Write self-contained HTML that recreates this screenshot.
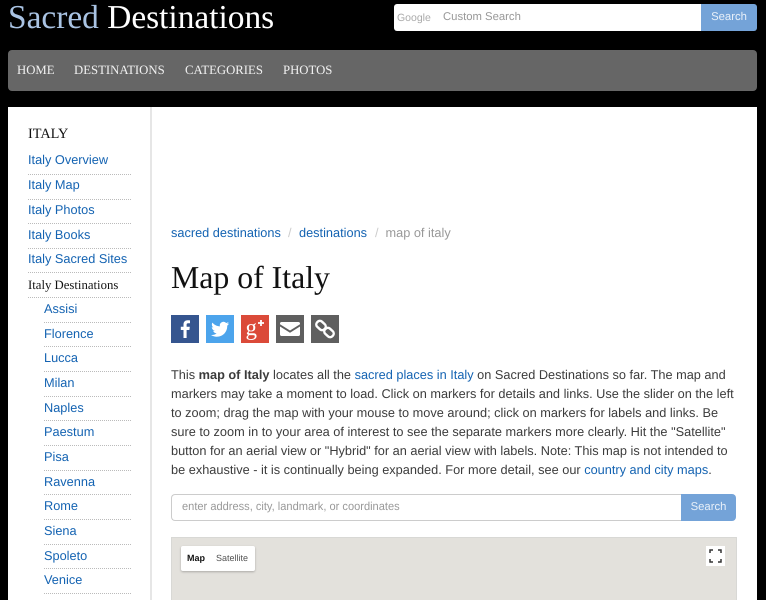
<!DOCTYPE html>
<html><head><meta charset="utf-8"><style>
html,body{margin:0;padding:0;background:#000;width:766px;height:600px;overflow:hidden}
body{position:relative;font-family:"Liberation Sans",sans-serif;font-size:12.75px;color:#333;filter:blur(.3px);text-rendering:geometricPrecision}
a{color:#1463b2;text-decoration:none}
.a{position:absolute;white-space:nowrap}
.s{font-family:"Liberation Serif",serif}
.side a,.side span{position:absolute;white-space:nowrap;line-height:20px}
.side i{position:absolute;height:0;border-top:1px dotted #bbb;display:block}
.ic{position:absolute;top:315px;width:28px;height:28px}
</style></head><body>
<div class="a s" style="left:8px;top:-3px;font-size:33.4px;line-height:42px;color:#fff"><span style="color:#a9c3e3">Sacred</span> Destinations</div>
<div class="a" style="left:394px;top:4px;width:307px;height:27px;background:#fff;border-radius:3px 0 0 3px"></div>
<div class="a" style="left:397px;top:11px;font-size:10.500px;line-height:14px;color:#aaa">Google</div>
<div class="a" style="left:443px;top:9px;font-size:11.300px;line-height:16px;color:#999">Custom Search</div>
<div class="a" style="left:701px;top:4px;width:56px;height:27px;background:#74a3d8;border-radius:0 3px 3px 0;color:#e8f0f9;font-size:11.300px;line-height:26px;text-align:center">Search</div>
<div class="a" style="left:8px;top:50px;width:749px;height:41px;background:#666;border-radius:4px"></div>
<div class="s" style="color:#f0f0f0;font-size:12.75px;line-height:18px">
<span class="a" style="left:17px;top:60.500px">HOME</span>
<span class="a" style="left:74px;top:60.500px">DESTINATIONS</span>
<span class="a" style="left:185px;top:60.500px">CATEGORIES</span>
<span class="a" style="left:283px;top:60.500px">PHOTOS</span>
</div>
<div class="a" style="left:8px;top:107px;width:749px;height:493px;background:#fff"></div>
<div class="a" style="left:150px;top:107px;width:2px;height:493px;background:#e6e6e6"></div>
<div class="side">
<span class="s" style="left:28px;top:124px;font-size:14.300px;color:#111">ITALY</span>
<a style="left:28px;top:150px">Italy Overview</a><i style="left:28px;top:174px;width:103px"></i>
<a style="left:28px;top:175px">Italy Map</a><i style="left:28px;top:199px;width:103px"></i>
<a style="left:28px;top:200px">Italy Photos</a><i style="left:28px;top:223px;width:103px"></i>
<a style="left:28px;top:224.500px">Italy Books</a><i style="left:28px;top:248px;width:103px"></i>
<a style="left:28px;top:249px">Italy Sacred Sites</a><i style="left:28px;top:272px;width:103px"></i>
<span class="s" style="left:28px;top:275px;font-size:12.75px;color:#111">Italy Destinations</span><i style="left:28px;top:297px;width:103px"></i>
<a style="left:44px;top:299px">Assisi</a><i style="left:44px;top:322px;width:87px"></i>
<a style="left:44px;top:323.500px">Florence</a><i style="left:44px;top:346px;width:87px"></i>
<a style="left:44px;top:348px">Lucca</a><i style="left:44px;top:371px;width:87px"></i>
<a style="left:44px;top:373px">Milan</a><i style="left:44px;top:396px;width:87px"></i>
<a style="left:44px;top:397.500px">Naples</a><i style="left:44px;top:420px;width:87px"></i>
<a style="left:44px;top:422px">Paestum</a><i style="left:44px;top:445px;width:87px"></i>
<a style="left:44px;top:447px">Pisa</a><i style="left:44px;top:470px;width:87px"></i>
<a style="left:44px;top:471.500px">Ravenna</a><i style="left:44px;top:494px;width:87px"></i>
<a style="left:44px;top:496px">Rome</a><i style="left:44px;top:519px;width:87px"></i>
<a style="left:44px;top:521px">Siena</a><i style="left:44px;top:544px;width:87px"></i>
<a style="left:44px;top:545.500px">Spoleto</a><i style="left:44px;top:568px;width:87px"></i>
<a style="left:44px;top:570px">Venice</a><i style="left:44px;top:593px;width:87px"></i>
</div>
<a class="a" style="left:171px;top:223px;line-height:20px">sacred destinations</a>
<span class="a" style="left:288px;top:223px;line-height:20px;color:#ccc">/</span>
<a class="a" style="left:299px;top:223px;line-height:20px">destinations</a>
<span class="a" style="left:375px;top:223px;line-height:20px;color:#ccc">/</span>
<span class="a" style="left:385.500px;top:223px;line-height:20px;color:#999">map of italy</span>
<div class="a s" style="left:171px;top:257px;font-size:31.8px;line-height:42px;color:#111">Map of Italy</div>

<svg class="ic" style="left:171px" viewBox="0 0 28 28"><rect width="28" height="28" fill="#35558f"/><path d="M15.6 23v-8h2.800l.4-3.200h-3.200V9.800c0-.9.3-1.500 1.600-1.500H19V5.400c-.3 0-1.300-.1-2.400-.1-2.400 0-4.100 1.500-4.100 4.200v2.300H9.800V15h2.700v8z" fill="#fff"/></svg>
<svg class="ic" style="left:206px" viewBox="0 0 28 28"><rect width="28" height="28" fill="#4ca4ec"/><path d="M23 8.500c-.7.300-1.400.5-2.100.6.800-.5 1.300-1.200 1.600-2-.7.400-1.500.7-2.300.9a3.700 3.700 0 0 0-6.300 3.400c-3-.2-5.700-1.600-7.500-3.800-1 1.700-.5 3.800 1.100 4.900-.6 0-1.200-.2-1.700-.5 0 1.800 1.300 3.300 3 3.700-.5.100-1.100.2-1.700.1.500 1.500 1.900 2.500 3.500 2.600A7.500 7.500 0 0 1 5 20c1.700 1.100 3.700 1.700 5.700 1.700 6.900 0 10.800-5.800 10.500-11 .7-.5 1.300-1.200 1.800-2.200z" fill="#fff"/></svg>
<svg class="ic" style="left:241px" viewBox="0 0 28 28"><rect width="28" height="28" fill="#db4a39"/><text x="4.500" y="20" font-family="Liberation Serif,serif" font-size="23" fill="#fff">g</text><path d="M17 8h6M20 5v6" stroke="#fff" stroke-width="1.800"/></svg>
<svg class="ic" style="left:276px" viewBox="0 0 28 28"><rect width="28" height="28" fill="#5f5f5f"/><path d="M4 8.500c0-.8.600-1.500 1.500-1.500h17c.9 0 1.500.7 1.500 1.500v.7l-10 6.300-10-6.300zM4 11.500l10 6.200 10-6.200v8c0 .8-.6 1.500-1.500 1.500h-17C4.600 21 4 20.300 4 19.500z" fill="#fff"/></svg>
<svg class="ic" style="left:311px" viewBox="0 0 28 28"><rect width="28" height="28" fill="#5f5f5f"/><g fill="none" stroke="#fff" stroke-width="2.400"><rect x="5" y="7" width="10" height="7" rx="3.200" transform="rotate(42 10 10.500)"/><rect x="13" y="14" width="10" height="7" rx="3.200" transform="rotate(42 18 17.500)"/></g></svg>

<div class="a" style="left:171px;top:365px;line-height:19px;color:#3c3c3c">This <b>map of Italy</b> locates all the <a>sacred places in Italy</a> on Sacred Destinations so far. The map and<br>markers may take a moment to load. Click on markers for details and links. Use the slider on the left<br>to zoom; drag the map with your mouse to move around; click on markers for labels and links. Be<br>sure to zoom in to your area of interest to see the separate markers more clearly. Hit the "Satellite"<br>button for an aerial view or "Hybrid" for an aerial view with labels. Note: This map is not intended to<br>be exhaustive - it is continually being expanded. For more detail, see our <a>country and city maps</a>.</div>

<div class="a" style="left:171px;top:494px;width:510px;height:25px;border:1px solid #ccc;border-right:0;border-radius:4px 0 0 4px;background:#fff"></div>
<div class="a" style="left:182px;top:499px;font-size:11.600px;line-height:16px;color:#999;transform:scaleX(.955);transform-origin:0 0">enter address, city, landmark, or coordinates</div>
<div class="a" style="left:681px;top:494px;width:55px;height:27px;background:#74a3d8;border-radius:0 4px 4px 0;color:#e8f0f9;font-size:11.300px;line-height:26px;text-align:center">Search</div>

<div class="a" style="left:171px;top:537px;width:564px;height:63px;background:#e3e1dc;border:1px solid #d8d8d5;border-bottom:0"></div>
<div class="a" style="left:181px;top:546px;width:74px;height:25px;background:#fff;box-shadow:0 1px 2px rgba(0,0,0,.25);border-radius:2px"></div>
<div class="a" style="left:187px;top:552px;font-size:9px;line-height:13px;color:#111;font-weight:bold">Map</div>
<div class="a" style="left:216px;top:552px;font-size:9px;line-height:13px;color:#555">Satellite</div>
<svg class="a" style="left:706px;top:546px" width="19" height="20" viewBox="0 0 19 20"><rect width="19" height="20" fill="#fff"/><path d="M4 7V4h3M12 4h3v3M4 13v3h3M15 13v3h-3" fill="none" stroke="#333" stroke-width="1.500"/></svg>
</body></html>
